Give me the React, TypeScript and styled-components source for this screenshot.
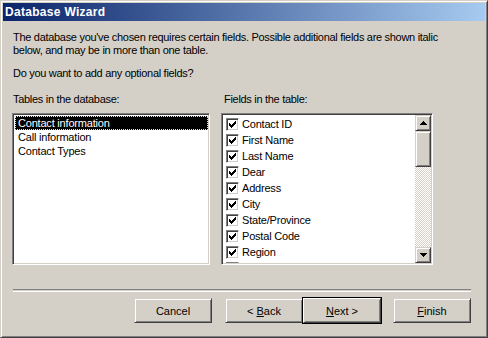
import React from "react";
import styled, { createGlobalStyle } from "styled-components";

const GlobalStyle = createGlobalStyle`
  html, body {
    margin: 0;
    padding: 0;
    background: #d4d0c8;
  }
  body {
    font-family: "Liberation Sans", Arial, sans-serif;
    font-size: 11px;
    color: #000;
  }
`;

const Window = styled.div`
  box-sizing: border-box;
  width: 488px;
  height: 338px;
  padding: 1px;
  background: #d4d0c8;
  border-top: 1px solid #d4d0c8;
  border-left: 1px solid #d4d0c8;
  border-right: 1px solid #404040;
  border-bottom: 1px solid #404040;
  box-shadow: inset 1px 1px 0 #fff, inset -1px -1px 0 #808080;
  display: flex;
  flex-direction: column;
`;

const TitleBar = styled.div`
  height: 18px;
  margin: 1px 1px 0 1px;
  background: linear-gradient(to right, #0a246a, #a6caf0);
  color: #fff;
  font-weight: bold;
  font-size: 12px;
  letter-spacing: 0.3px;
  line-height: 18px;
  padding-left: 2px;
`;

const Body = styled.div`
  padding: 0 15px 0 10px;
`;

const Para = styled.p<{ $top: number }>`
  margin: ${(p) => p.$top}px 0 0 1px;
  line-height: 13px;
  white-space: nowrap;
  letter-spacing: -0.3px;
`;

const Columns = styled.div`
  display: grid;
  grid-template-columns: 198px 212px;
  column-gap: 11px;
  margin-top: 13px;
`;

const Column = styled.div`
  display: flex;
  flex-direction: column;
`;

const Label = styled.div<{ $indent: number }>`
  line-height: 13px;
  letter-spacing: -0.3px;
  margin: 0 0 7px ${(p) => p.$indent}px;
`;

const ListBox = styled.div`
  box-sizing: border-box;
  height: 152px;
  background: #fff;
  border-top: 1px solid #808080;
  border-left: 1px solid #808080;
  border-right: 1px solid #fff;
  border-bottom: 1px solid #fff;
  box-shadow: inset 1px 1px 0 #404040, inset -1px -1px 0 #d4d0c8;
  padding: 1px;
  overflow: hidden;
  display: flex;
`;

const Rows = styled.div`
  flex: 1;
  min-width: 0;
  overflow: hidden;
  padding-top: 1px;
`;

const TableRow = styled.div<{ $selected?: boolean }>`
  box-sizing: border-box;
  height: 14px;
  line-height: 12px;
  padding-left: 2px;
  margin-left: 1px;
  white-space: nowrap;
  letter-spacing: -0.2px;
  background: ${(p) => (p.$selected ? "#000" : "transparent")};
  color: ${(p) => (p.$selected ? "#fff" : "#000")};
  border: 1px ${(p) => (p.$selected ? "dotted #e8e8a0" : "solid transparent")};
`;

const FieldRow = styled.div`
  height: 16px;
  display: flex;
  align-items: center;
  gap: 3px;
  padding-left: 3px;
  white-space: nowrap;
  letter-spacing: -0.2px;
`;

const CheckBox = styled.span`
  box-sizing: border-box;
  width: 13px;
  height: 13px;
  flex: none;
  background: #fff;
  border-top: 1px solid #808080;
  border-left: 1px solid #808080;
  border-right: 1px solid #fff;
  border-bottom: 1px solid #fff;
  box-shadow: inset 1px 1px 0 #404040, inset -1px -1px 0 #d4d0c8;
  display: flex;
  align-items: center;
  justify-content: center;
`;

const ScrollBar = styled.div`
  width: 16px;
  flex: none;
  display: flex;
  flex-direction: column;
`;

const raised = `
  box-sizing: border-box;
  background: #d4d0c8;
  border-top: 1px solid #d4d0c8;
  border-left: 1px solid #d4d0c8;
  border-right: 1px solid #404040;
  border-bottom: 1px solid #404040;
  box-shadow: inset 1px 1px 0 #fff, inset -1px -1px 0 #808080;
`;

const ArrowButton = styled.div`
  ${raised}
  height: 16px;
  flex: none;
  display: flex;
  align-items: center;
  justify-content: center;
`;

const Thumb = styled.div`
  ${raised}
  height: 36px;
  flex: none;
`;

const Track = styled.div`
  flex: 1;
  background: repeating-conic-gradient(#d4d0c8 0 25%, #fff 0 50%) 0 0 / 2px 2px;
`;

const Separator = styled.div`
  margin: 24px 0 0 1px;
  height: 1px;
  border-top: 1px solid #808080;
  border-bottom: 1px solid #fff;
`;

const ButtonRow = styled.div`
  display: flex;
  justify-content: flex-end;
  margin-top: 6px;
`;

const Button = styled.div<{ $default?: boolean; $gap?: number }>`
  ${raised}
  width: 78px;
  height: 25px;
  margin-left: ${(p) => p.$gap ?? 0}px;
  display: flex;
  align-items: center;
  justify-content: center;
  ${(p) =>
    p.$default
      ? `border-color: #fff #404040 #404040 #fff;
         box-shadow: 0 0 0 1px #000, inset 1px 1px 0 #d4d0c8, inset -1px -1px 0 #808080;`
      : ""}
`;

const Check = () => (
  <svg width="7" height="7" viewBox="0 0 7 7" shapeRendering="crispEdges">
    <path
      fill="#000"
      d="M6 0h1v1h-1zM5 1h2v1h-2zM0 2h1v1h-1zM4 2h3v1h-3zM0 3h2v1h-2zM3 3h3v1h-3zM0 4h5v1h-5zM1 5h3v1h-3zM2 6h1v1h-1z"
    />
  </svg>
);

const Arrow = ({ down }: { down?: boolean }) => (
  <svg width="7" height="4" viewBox="0 0 7 4" shapeRendering="crispEdges">
    <path
      fill="#000"
      d={
        down
          ? "M0 0h7v1h-7zM1 1h5v1h-5zM2 2h3v1h-3zM3 3h1v1h-1z"
          : "M3 0h1v1h-1zM2 1h3v1h-3zM1 2h5v1h-5zM0 3h7v1h-7z"
      }
    />
  </svg>
);

const tables = ["Contact information", "Call information", "Contact Types"];

const fields = [
  "Contact ID",
  "First Name",
  "Last Name",
  "Dear",
  "Address",
  "City",
  "State/Province",
  "Postal Code",
  "Region",
  "Country",
];

export default function App() {
  return (
    <>
      <GlobalStyle />
      <Window>
        <TitleBar>Database Wizard</TitleBar>
        <Body>
          <Para $top={10}>
            The database you've chosen requires certain fields. Possible additional fields are shown italic
            <br />
            below, and may be in more than one table.
          </Para>
          <Para $top={10}>Do you want to add any optional fields?</Para>
          <Columns>
            <Column>
              <Label $indent={1}>Tables in the database:</Label>
              <ListBox>
                <Rows>
                  {tables.map((t, i) => (
                    <TableRow key={t} $selected={i === 0}>
                      {t}
                    </TableRow>
                  ))}
                </Rows>
              </ListBox>
            </Column>
            <Column>
              <Label $indent={3}>Fields in the table:</Label>
              <ListBox>
                <Rows>
                  {fields.map((f) => (
                    <FieldRow key={f}>
                      <CheckBox>
                        <Check />
                      </CheckBox>
                      {f}
                    </FieldRow>
                  ))}
                </Rows>
                <ScrollBar>
                  <ArrowButton>
                    <Arrow />
                  </ArrowButton>
                  <Thumb />
                  <Track />
                  <ArrowButton>
                    <Arrow down />
                  </ArrowButton>
                </ScrollBar>
              </ListBox>
            </Column>
          </Columns>
          <Separator />
          <ButtonRow>
            <Button>Cancel</Button>
            <Button $gap={13}>
              &lt;&nbsp;<u>B</u>ack
            </Button>
            <Button $default>
              <u>N</u>ext &gt;
            </Button>
            <Button $gap={12}>
              <u>F</u>inish
            </Button>
          </ButtonRow>
        </Body>
      </Window>
    </>
  );
}
